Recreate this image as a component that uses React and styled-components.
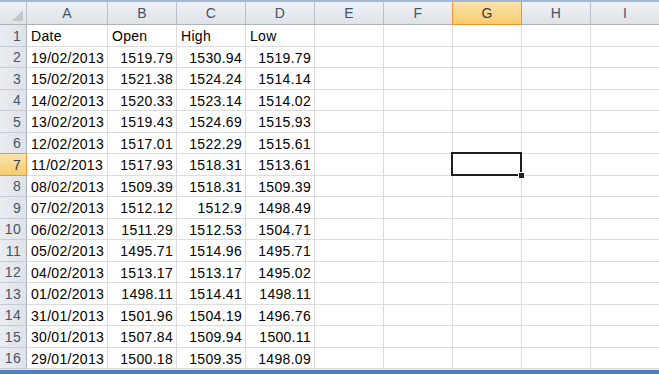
import React from 'react';
import styled, { createGlobalStyle, css } from 'styled-components';

const GlobalStyle = createGlobalStyle`
	html, body {
		margin: 0;
		padding: 0;
		background: #ffffff;
		overflow: hidden;
	}
	body {
		font-family: 'Liberation Sans', Arial, sans-serif;
	}
`;

const Window = styled.div`
	width: 659px;
	height: 374px;
	display: flex;
	flex-direction: column;
	background: #ffffff;
	overflow: hidden;
	border-top: 2px solid #a3b8d2;
	box-sizing: border-box;
`;

const Sheet = styled.div`
	display: grid;
	grid-template-columns: 27px 81px repeat(8, 69px);
	grid-template-rows: 23px repeat(8, 22px 21px);
	font-size: 14px;
	letter-spacing: 0.3px;
	color: #000000;
`;

const Corner = styled.div`
	position: relative;
	background: linear-gradient(#eef1f5, #dfe3e8);
	border-right: 1px solid #b6bec8;
	border-bottom: 1px solid #aab3be;
	box-sizing: border-box;

	&::after {
		content: '';
		position: absolute;
		right: 3px;
		bottom: 3px;
		width: 0;
		height: 0;
		border-left: 11px solid transparent;
		border-bottom: 11px solid #c3c8ce;
	}
`;

const selected = css`
	background: linear-gradient(#fbe3ad, #f6cb6c);
	color: #3a3a3a;
	border-color: #f29436;
`;

const ColHead = styled.div`
	display: flex;
	align-items: center;
	justify-content: center;
	background: linear-gradient(#eef1f5, #dfe3e8);
	color: #46546a;
	border-right: 1px solid #b6bec8;
	border-bottom: 1px solid #aab3be;
	box-sizing: border-box;
	${(p) => p.$active && selected}
	${(p) => p.$active && 'border-left: 1px solid #f29436; margin-left: -1px;'}
`;

const RowHead = styled.div`
	display: flex;
	align-items: center;
	justify-content: flex-end;
	padding-right: 5px;
	background: linear-gradient(90deg, #e9ecf0, #dfe3e8);
	color: #46546a;
	border-right: 1px solid #aab3be;
	border-bottom: 1px solid #c5ccd5;
	box-sizing: border-box;
	${(p) => p.$active && selected}
	${(p) => p.$active && 'border-top: 1px solid #f29436; margin-top: -1px;'}
`;

const Cell = styled.div`
	position: relative;
	display: flex;
	align-items: center;
	justify-content: ${(p) => (p.$num ? 'flex-end' : 'flex-start')};
	padding: 1px 3px 0 4px;
	border-right: 1px solid #dcdcdc;
	border-bottom: 1px solid #dcdcdc;
	box-sizing: border-box;
	white-space: nowrap;
	overflow: visible;

	${(p) =>
		p.$focus &&
		css`
			&::after {
				content: '';
				position: absolute;
				left: -2px;
				top: -2px;
				right: -1px;
				bottom: -1px;
				border: 2px solid #1f1f1f;
				z-index: 2;
			}
		`}
`;

const Handle = styled.span`
	position: absolute;
	right: -4px;
	bottom: -4px;
	width: 5px;
	height: 5px;
	background: #1f1f1f;
	border: 1px solid #ffffff;
	box-sizing: content-box;
	z-index: 3;
`;

const Footer = styled.div`
	margin-top: auto;
	height: 1px;
	background: #e2e6eb;
	border-bottom: 4px solid #4f7fc0;
`;

const COLS = ['A', 'B', 'C', 'D', 'E', 'F', 'G', 'H', 'I'];

const DATA = [
	['19/02/2013', '1519.79', '1530.94', '1519.79'],
	['15/02/2013', '1521.38', '1524.24', '1514.14'],
	['14/02/2013', '1520.33', '1523.14', '1514.02'],
	['13/02/2013', '1519.43', '1524.69', '1515.93'],
	['12/02/2013', '1517.01', '1522.29', '1515.61'],
	['11/02/2013', '1517.93', '1518.31', '1513.61'],
	['08/02/2013', '1509.39', '1518.31', '1509.39'],
	['07/02/2013', '1512.12', '1512.9', '1498.49'],
	['06/02/2013', '1511.29', '1512.53', '1504.71'],
	['05/02/2013', '1495.71', '1514.96', '1495.71'],
	['04/02/2013', '1513.17', '1513.17', '1495.02'],
	['01/02/2013', '1498.11', '1514.41', '1498.11'],
	['31/01/2013', '1501.96', '1504.19', '1496.76'],
	['30/01/2013', '1507.84', '1509.94', '1500.11'],
	['29/01/2013', '1500.18', '1509.35', '1498.09'],
];

const ROWS = [['Date', 'Open', 'High', 'Low'], ...DATA];

const ACTIVE_COL = 6;
const ACTIVE_ROW = 7;

const App = () => {
	return (
		<>
			<GlobalStyle />
			<Window>
				<Sheet>
					<Corner />
					{COLS.map((c, i) => (
						<ColHead key={c} $active={i === ACTIVE_COL}>
							{c}
						</ColHead>
					))}
					{ROWS.map((row, r) => (
						<React.Fragment key={r}>
							<RowHead $active={r + 1 === ACTIVE_ROW}>{r + 1}</RowHead>
							{COLS.map((c, i) => {
								const value = row[i];
								const focus = i === ACTIVE_COL && r + 1 === ACTIVE_ROW;
								return (
									<Cell key={c} $num={r > 0 && i > 0} $focus={focus}>
										{value}
										{focus && <Handle />}
									</Cell>
								);
							})}
						</React.Fragment>
					))}
				</Sheet>
				<Footer />
			</Window>
		</>
	);
};

export default App;
